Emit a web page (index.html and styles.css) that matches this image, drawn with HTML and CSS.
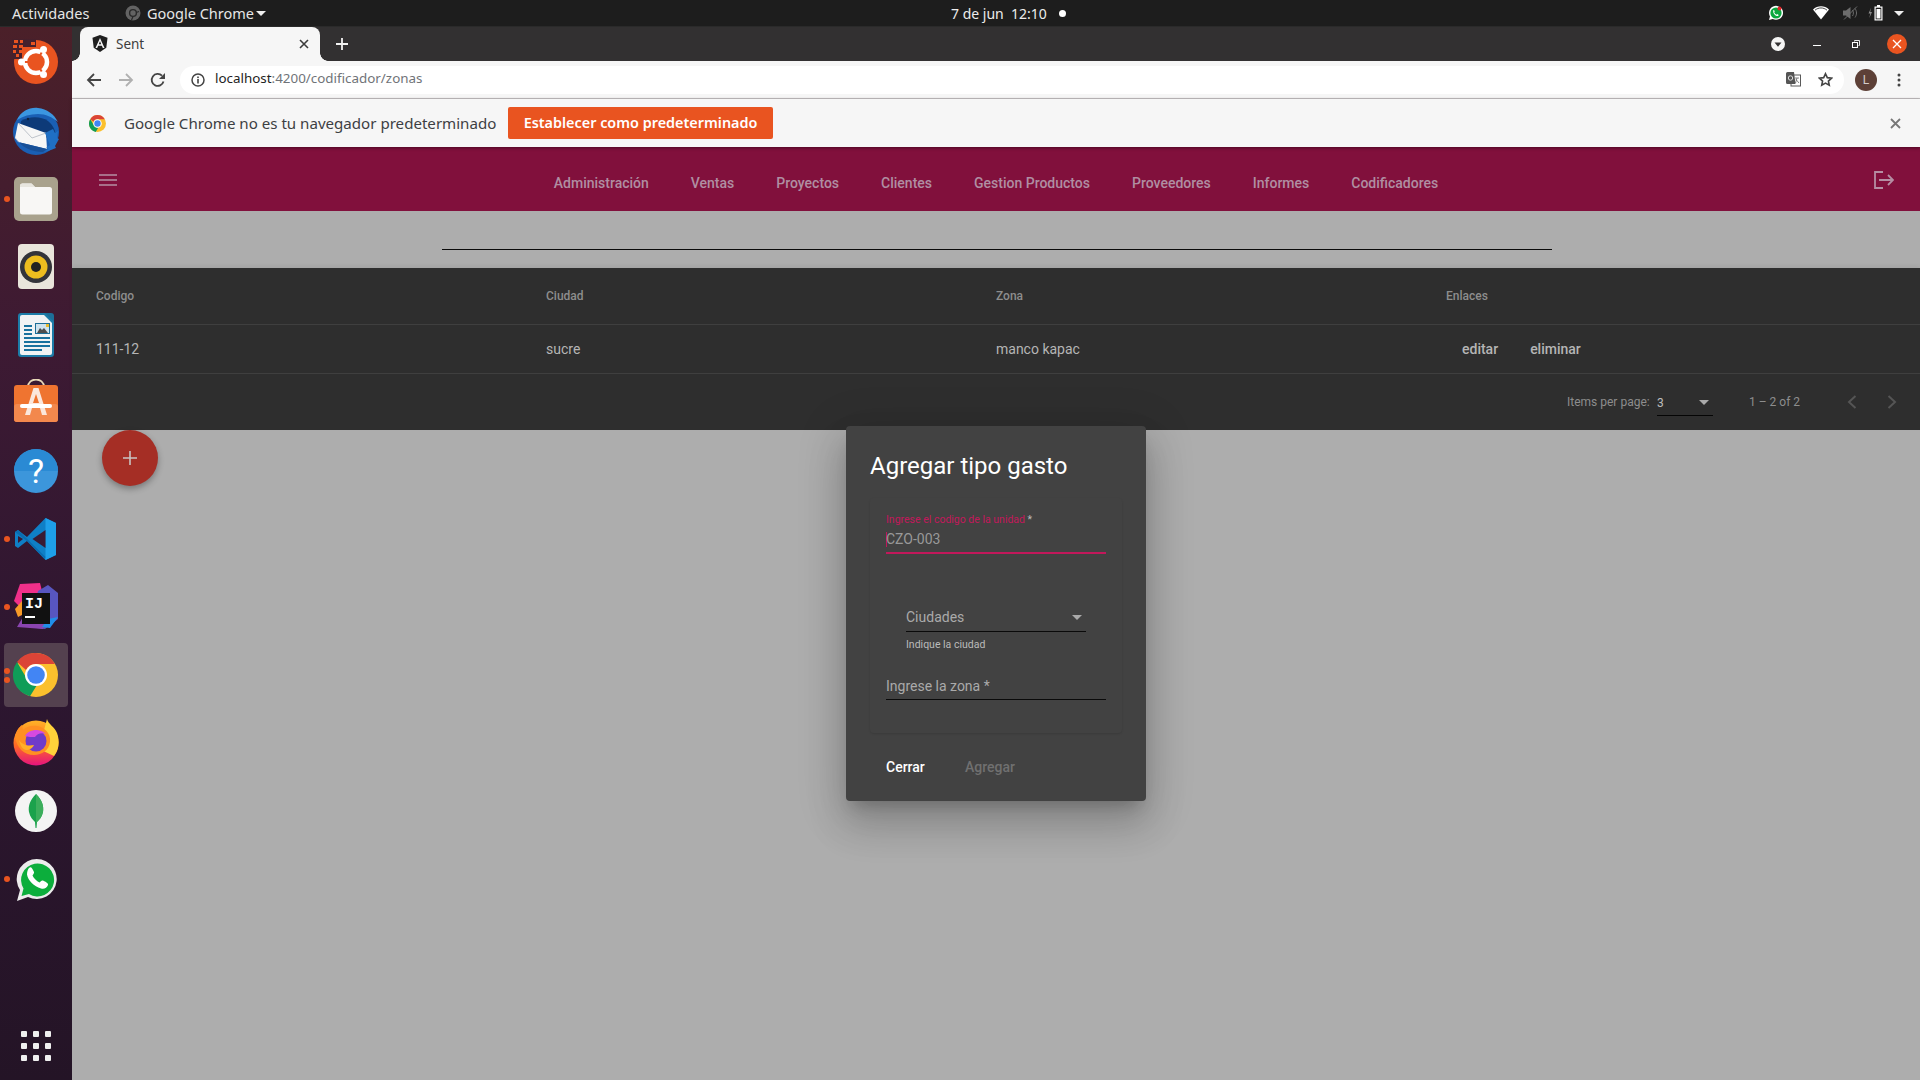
FILE: index.html
```html
<!DOCTYPE html>
<html lang="es">
<head>
<meta charset="utf-8">
<title>Sent</title>
<link rel="stylesheet" href="styles.css">
</head>
<body>
<header class="topbar">
  <span class="tb-act">Actividades</span>
  <svg class="tb-appicon" width="16" height="16" viewBox="0 0 16 16"><circle cx="8" cy="8" r="7.5" fill="#6b6b6b"/><circle cx="8" cy="8" r="3.4" fill="none" stroke="#2b2b2b" stroke-width="1.4"/><path d="M8 11.4L6.5 15M11.2 7.5l2.8-1" stroke="#2b2b2b" stroke-width="1.2"/></svg>
  <span class="tb-app">Google Chrome</span>
  <span class="caret"></span>
  <span class="tb-clock">7 de jun&nbsp; 12:10</span>
  <span class="tb-dot"></span>
  <svg class="tb-wa" width="16" height="16" viewBox="0 0 16 16"><path d="M1 15l1-3.6A7 7 0 1 1 4.700 14z" fill="#fff"/><circle cx="8" cy="8" r="5.600" fill="#0aa83f"/><path d="M5.500 5c.8-.6 1.100 1.500 1.200 1.700l-.5.800c.5 1 1.200 1.700 2.200 2.200l.8-.6 1.500 1c-.3 1.400-2 1-3 .4C6.300 9.800 4.500 7 5.500 5z" fill="#fff"/><circle cx="11.500" cy="3.500" r="2" fill="#e0262a"/></svg>
  <svg class="tb-wifi" width="16" height="14" viewBox="0 0 16 14"><path d="M0 3.500C4.500-.8 11.500-.8 16 3.500L8 13.500z" fill="#fff"/><path d="M2 4.200C5.500 1.200 10.500 1.200 14 4.200" stroke="#1d1d1d" stroke-width=".8" fill="none"/></svg>
  <svg class="tb-vol" width="16" height="14" viewBox="0 0 16 14"><path d="M0 4.500h3L7.500 1v12L3 9.500H0z" fill="#6d6d6d"/><path d="M9.500 4c1.200 1.800 1.200 4.200 0 6M12 2.500c2 2.800 2 6.200 0 9" stroke="#6d6d6d" fill="none"/><path d="M1 13.500L14 .5" stroke="#6d6d6d"/></svg>
  <svg class="tb-bat" width="16" height="16" viewBox="0 0 16 16"><path d="M3 3L.5 8.500h1.800L1.300 13 4 7H2.200z" fill="#8d8d8d"/><path d="M9 0h3v1.500h2.500V15.500h-8V1.500H9z" fill="#fff"/><rect x="7.700" y="2.700" width="5.600" height="11.600" fill="#1d1d1d"/><rect x="8.500" y="4" width="4" height="9.500" fill="#fff"/></svg>
  <span class="caret caret-end"></span>
</header>

<div class="desktop">
  <nav class="dock">
    <div class="dock-item">
      <svg width="48" height="48" viewBox="0 0 48 48"><circle cx="24" cy="23" r="22" fill="#e95420"/><path d="M0 0h24v8H10v12H0z" fill="#45202c"/><g fill="#e95420"><rect x="2" y="1" width="4" height="3"/><rect x="8" y="1" width="3" height="3"/><rect x="19" y="3" width="4" height="3"/><rect x="1" y="6" width="4" height="3"/><rect x="7" y="6" width="4" height="3"/><rect x="1" y="11" width="3" height="3"/><rect x="7" y="11" width="5" height="3"/><rect x="4" y="15" width="3" height="3"/></g><circle cx="24" cy="23" r="11" fill="none" stroke="#fff" stroke-width="4.500"/><g stroke="#e95420" stroke-width="2"><path d="M11 23h7M30 13l-3 5M30 33l-3-5"/></g><circle cx="9.500" cy="23" r="3.500" fill="#fff"/><circle cx="31.500" cy="10.500" r="3.500" fill="#fff"/><circle cx="31.500" cy="35.500" r="3.500" fill="#fff"/></svg>
    </div>
    <div class="dock-item">
      <svg width="48" height="48" viewBox="0 0 48 48"><circle cx="24" cy="25" r="23" fill="#1a5fb4"/><path d="M5 13C9 4 18 0 26 1c9 1 16 6 20 14-6-5-12-8-20-8-8 0-15 2-21 6z" fill="#3b96e0"/><path d="M9 14c8-5 20-5 27 0 6 5 9 12 7 20L33 30 8 20z" fill="#0d3a78"/><circle cx="16" cy="12" r="1.200" fill="#10233f"/><path d="M6 16l28 10 1 16L6 35l-3-4z" fill="#f6f6f6"/><path d="M6 16l14 15 14-5" fill="none" stroke="#bfc4cb" stroke-width="1"/><path d="M33 26l8-4 2 4 3-2-1 7 2 1-4 7 1 2-5 2-3 1-5 1 6-3-3-1 4-3z" fill="#1f6fc4"/><path d="M3 30l3 5 29 7-4 3c-12 0-22-5-28-15z" fill="#174f97"/></svg>
    </div>
    <div class="dock-item">
      <span class="run-dot"></span>
      <svg width="48" height="48" viewBox="0 0 48 48"><rect x="2" y="2" width="44" height="44" rx="5" fill="#a9a28d"/><path d="M8 11a2.500 2.500 0 0 1 2.500-2.500h9L23 12h14.500A2.500 2.500 0 0 1 40 14.500V37a2.500 2.500 0 0 1-2.500 2.500h-27A2.500 2.500 0 0 1 8 37z" fill="#f8f7f5"/><path d="M8 11a2.500 2.500 0 0 1 2.500-2.500h9L23 12H8z" fill="#e8e6df"/></svg>
    </div>
    <div class="dock-item">
      <svg width="48" height="48" viewBox="0 0 48 48"><rect x="6" y="1" width="36" height="45" rx="4" fill="#e9e5db"/><circle cx="24" cy="24" r="16" fill="#33343a"/><circle cx="24" cy="24" r="11.500" fill="#edbd1f"/><circle cx="24" cy="24" r="5" fill="#222"/></svg>
    </div>
    <div class="dock-item">
      <svg width="48" height="48" viewBox="0 0 48 48"><path d="M6 5a3 3 0 0 1 3-3h25l8 8v33a3 3 0 0 1-3 3H9a3 3 0 0 1-3-3z" fill="#1c7ca8"/><path d="M8 6a2 2 0 0 1 2-2h22l8 8v30a2 2 0 0 1-2 2H10a2 2 0 0 1-2-2z" fill="#f1f3f4"/><path d="M33 2h6a3 3 0 0 1 3 3v6z" fill="#1d6e97"/><g fill="#18719e"><rect x="12" y="14" width="8" height="2"/><rect x="12" y="18" width="8" height="2"/><rect x="12" y="22" width="8" height="2"/><rect x="12" y="26" width="26" height="2"/><rect x="12" y="30" width="26" height="2"/><rect x="12" y="34" width="26" height="2"/><rect x="12" y="38" width="18" height="2"/></g><rect x="23" y="12" width="15" height="11" fill="#1d6e97"/><rect x="24" y="13" width="13" height="9" fill="#cfe3ee"/><path d="M25 22l3-5 2 2 2-2 4 5z" fill="#4c4c4c"/><rect x="34" y="13" width="3" height="3" fill="#edbe2e"/></svg>
    </div>
    <div class="dock-item">
      <svg width="48" height="48" viewBox="0 0 48 48"><path d="M16 8c0-10 16-10 16 0" fill="none" stroke="#e8d9b8" stroke-width="1.800"/><rect x="2" y="6" width="44" height="37" rx="3" fill="#ef7430"/><rect x="2" y="25" width="44" height="18" rx="3" fill="#f3884d"/><path d="M21.500 9h5L35 36h-5l-2-7h-8l-2 7h-5z" fill="#fbe7dc"/><path d="M21 24h6l-3-9z" fill="#ef7430"/><rect x="8" y="25" width="32" height="4" rx="2" fill="#fff"/></svg>
    </div>
    <div class="dock-item">
      <svg width="48" height="48" viewBox="0 0 48 48"><circle cx="24" cy="24" r="22" fill="#3c96db"/><path d="M2 24a22 22 0 0 1 44 0z" fill="#2a8ad4"/><text x="24" y="36" class="help-q">?</text></svg>
    </div>
    <div class="dock-item">
      <span class="run-dot"></span>
      <svg width="48" height="48" viewBox="0 0 48 48"><path d="M33.500 3L44 8v32l-10.500 5L15 26l-9 7-3-2v-14l3-2 9 7z" fill="#0f7fc6"/><path d="M33.500 3L44 8v32l-10.500 5z" fill="#1e9fe9"/><path d="M33.500 15L20.500 24l13 9z" fill="#3a1a33"/><path d="M3 17l3-2 27.500 27-1 2L15 26z" fill="#0a6cb0"/><path d="M6 21l5 3-5 4z" fill="#3a1a33"/></svg>
    </div>
    <div class="dock-item">
      <span class="run-dot"></span>
      <svg width="48" height="48" viewBox="0 0 48 48"><path d="M8 1l20-1 4 16-24 8-6-6z" fill="#f0308a"/><path d="M3 26l7-8 8 10-12 6z" fill="#f79a28"/><path d="M26 8l10-6 10 8v26l-13 10-17-2z" fill="#5856c0"/><path d="M5 44l6-10 26 4-6 8z" fill="#8a45b0"/><path d="M36 36l10-2-8 11-8-1z" fill="#1f8ee8"/><rect x="10" y="10" width="28" height="31" fill="#111"/><text x="13" y="25" class="ij-text">IJ</text><rect x="13" y="33" width="10" height="2" fill="#fff"/></svg>
    </div>
    <div class="dock-item is-active">
      <span class="run-dot run-dot-a"></span><span class="run-dot run-dot-b"></span>
      <svg width="48" height="48" viewBox="0 0 48 48"><circle cx="24" cy="24" r="22" fill="#fbc02d"/><path d="M24 2a22 22 0 0 1 19 11H24a11 11 0 0 0-10 6L5 11A22 22 0 0 1 24 2z" fill="#db4437"/><path d="M5 11l10 17a10 10 0 0 0 10 6l-7 11.200A22 22 0 0 1 5 11z" fill="#0f9d58"/><circle cx="24" cy="24" r="11" fill="#fff"/><circle cx="24" cy="24" r="8.800" fill="#4285f4"/></svg>
    </div>
    <div class="dock-item">
      <svg width="48" height="48" viewBox="0 0 48 48"><defs><linearGradient id="ffg" x1="0" y1="0" x2="0" y2="1"><stop offset="0" stop-color="#ffb327"/><stop offset=".55" stop-color="#ff6a24"/><stop offset="1" stop-color="#e5137e"/></linearGradient></defs><circle cx="24" cy="24" r="22.500" fill="url(#ffg)"/><path d="M35 0c1 5 8 8 10 14 3 8 2 17-3 23L27 30z" fill="#ffd23a"/><path d="M3 18C4 12 7 8 10 6l1 5c3-3 8-5 14-4 7 1 14 7 13 16-1 8-8 13-16 13C12 36 5 29 3 18z" fill="#ff9022"/><circle cx="24" cy="22" r="10.500" fill="#6f3bc9"/><path d="M13 17c4-7 15-8 21-2-5-2-9 0-11 3-3 0-7 0-10-1z" fill="#d64ae0"/><path d="M7 21c4 6 10 6 15 5-1 3-5 5-8 5-4-1-6-5-7-10z" fill="#ffb02a"/></svg>
    </div>
    <div class="dock-item">
      <svg width="48" height="48" viewBox="0 0 48 48"><circle cx="24" cy="24" r="21" fill="#f4f4f4"/><path d="M24 7c6 6 8 12 7 18-1 5-4 8-6 10l-.5 6h-1L23 35c-2-2-5-5-6-10-1-6 1-12 7-18z" fill="#1ba24c"/><path d="M24 7c6 6 8 12 7 18-1 5-4 8-6 10l-1 .5z" fill="#3cae5c"/></svg>
    </div>
    <div class="dock-item">
      <span class="run-dot"></span>
      <svg width="48" height="48" viewBox="0 0 48 48"><path d="M5 46l3-11A20 20 0 1 1 16 42z" fill="#ececec"/><path d="M9.500 41l2-7.500a16.500 16.500 0 1 1 5.500 5.500z" fill="#0cae3c"/><path d="M17 13c2-2 3 0 5 4 .5 1-1 2.500-1.500 3.500 1.500 3 4 5.500 7 7 1-1 2-2.500 3.500-2 4 2 5.500 3 5 4.500-1 3-4 4.500-7 3.500-7-2-13-8-14-14 0-3 1-5.500 2-6.500z" fill="#fff"/></svg>
    </div>
    <div class="dock-grid">
      <i></i><i></i><i></i><i></i><i></i><i></i><i></i><i></i><i></i>
    </div>
  </nav>

  <div class="window">
    <div class="tabstrip">
      <div class="tab">
        <svg width="16" height="17" viewBox="0 0 16 17"><path d="M8 0L.5 2.700l1.200 10L8 17l6.300-4.300 1.200-10z" fill="#1f1f1f"/><path d="M8 3L3.500 13h1.700l.9-2.300h3.800l.9 2.300h1.700zM6.800 9.200L8 6.300l1.200 2.900z" fill="#f6f6f6"/></svg>
        <span class="tab-title">Sent</span>
        <svg class="tab-close" width="10" height="10" viewBox="0 0 10 10"><path d="M1 1l8 8M9 1L1 9" stroke="#3c3c3c" stroke-width="1.600"/></svg>
      </div>
      <svg class="new-tab" width="12" height="12" viewBox="0 0 12 12"><path d="M6 0v12M0 6h12" stroke="#f2f2f2" stroke-width="1.800"/></svg>
      <svg class="win-drop" width="14" height="14" viewBox="0 0 14 14"><circle cx="7" cy="7" r="7" fill="#f5f5f5"/><path d="M3.500 5.500h7L7 9.800z" fill="#323031"/></svg>
      <span class="win-min"></span>
      <svg class="win-max" width="8" height="8" viewBox="0 0 8 8"><path d="M2.500 1.500V.5h5v5h-1" fill="none" stroke="#e8e8e8"/><rect x=".5" y="2.500" width="5" height="5" fill="none" stroke="#fff"/></svg>
      <svg class="win-close" width="20" height="20" viewBox="0 0 20 20"><circle cx="10" cy="10" r="10" fill="#e95420"/><path d="M6 6l8 8M14 6l-8 8" stroke="#fff" stroke-width="1.300"/></svg>
    </div>

    <div class="toolbar">
      <svg class="tl-back" width="16" height="16" viewBox="0 0 16 16"><path d="M15 8H2M8 2L2 8l6 6" fill="none" stroke="#444" stroke-width="1.800"/></svg>
      <svg class="tl-fwd" width="16" height="16" viewBox="0 0 16 16"><path d="M1 8h13M8 2l6 6-6 6" fill="none" stroke="#b0b0b0" stroke-width="1.800"/></svg>
      <svg class="tl-reload" width="16" height="16" viewBox="0 0 16 16"><path d="M13.500 9.500A6 6 0 1 1 12 3.700" fill="none" stroke="#444" stroke-width="1.800"/><path d="M15 1v6H9z" fill="#444"/></svg>
      <div class="omnibox">
        <svg class="ob-info" width="14" height="14" viewBox="0 0 14 14"><circle cx="7" cy="7" r="6" fill="none" stroke="#444" stroke-width="1.500"/><rect x="6.200" y="6" width="1.600" height="4.500" fill="#444"/><rect x="6.200" y="3.500" width="1.600" height="1.600" fill="#444"/></svg>
        <span class="url"><span class="url-host">localhost</span>:4200/codificador/zonas</span>
        <svg class="ob-trans" width="15" height="15" viewBox="0 0 15 15"><rect x="5" y="3" width="9.500" height="11" fill="#fff" stroke="#5a5a5a"/><path d="M0 1.500A1.500 1.500 0 0 1 1.500 0H8l1.500 12H1.500A1.500 1.500 0 0 1 0 10.500z" fill="#555"/><circle cx="4.500" cy="6" r="2.200" fill="none" stroke="#ddd"/><path d="M9 6h4M11 6l-1.500 5M10 7.500l3 3.500" stroke="#666" fill="none" stroke-width=".8"/></svg>
        <svg class="ob-star" width="15" height="15" viewBox="0 0 24 24"><path d="M12 2.800l2.900 6.200 6.800.8-5 4.700 1.300 6.700-6-3.400-6 3.400 1.300-6.700-5-4.700 6.800-.8z" fill="none" stroke="#444" stroke-width="2.600"/></svg>
      </div>
      <span class="avatar">L</span>
      <svg class="tl-menu" width="4" height="14" viewBox="0 0 4 14"><circle cx="2" cy="2" r="1.500" fill="#444"/><circle cx="2" cy="7" r="1.500" fill="#444"/><circle cx="2" cy="12" r="1.500" fill="#444"/></svg>
    </div>

    <div class="infobar">
      <svg class="ib-logo" width="17" height="17" viewBox="0 0 48 48"><circle cx="24" cy="24" r="24" fill="#fbc02d"/><path d="M24 0a24 24 0 0 1 20.800 12H24a12 12 0 0 0-11 7L3.500 12A24 24 0 0 1 24 0z" fill="#db4437"/><path d="M3.500 12L15 31a11 11 0 0 0 11 5l-7 12A24 24 0 0 1 3.500 12z" fill="#0f9d58"/><circle cx="24" cy="24" r="12" fill="#fff"/><circle cx="24" cy="24" r="9" fill="#4285f4"/></svg>
      <span class="ib-text">Google Chrome no es tu navegador predeterminado</span>
      <button class="ib-btn">Establecer como predeterminado</button>
      <svg class="ib-close" width="11" height="11" viewBox="0 0 11 11"><path d="M1 1l9 9M10 1l-9 9" stroke="#777" stroke-width="1.800"/></svg>
    </div>

    <div class="app">
      <header class="app-header">
        <svg class="menu-ic" width="18" height="12" viewBox="0 0 18 12"><path d="M0 1h18M0 6h18M0 11h18" stroke="#b58ea3" stroke-width="1.600"/></svg>
        <nav class="nav">
          <a>Administración</a><a>Ventas</a><a>Proyectos</a><a>Clientes</a><a>Gestion Productos</a><a>Proveedores</a><a>Informes</a><a>Codificadores</a>
        </nav>
        <svg class="logout-ic" width="20" height="18" viewBox="0 0 20 18"><path d="M9 1H1v16h8" fill="none" stroke="#b58ea3" stroke-width="1.800"/><path d="M5 9h14M14 4l5 5-5 5" fill="none" stroke="#b58ea3" stroke-width="1.800"/></svg>
      </header>

      <div class="search-row"><div class="search-line"></div></div>

      <section class="table">
        <div class="row row-head"><span>Codigo</span><span>Ciudad</span><span>Zona</span><span>Enlaces</span></div>
        <div class="row row-body">
          <span>111-12</span><span>sucre</span><span>manco kapac</span>
          <span class="actions"><a>editar</a><a>eliminar</a></span>
        </div>
        <div class="paginator">
          <span class="pg-label">Items per page:</span>
          <span class="pg-select"><span>3</span><i class="pg-arrow"></i></span>
          <span class="pg-range">1 – 2 of 2</span>
          <svg class="pg-prev" width="10" height="14" viewBox="0 0 10 14"><path d="M8.500 1L2 7l6.500 6" fill="none" stroke="#555" stroke-width="2"/></svg>
          <svg class="pg-next" width="10" height="14" viewBox="0 0 10 14"><path d="M1.500 1L8 7l-6.500 6" fill="none" stroke="#555" stroke-width="2"/></svg>
        </div>
      </section>

      <button class="fab"><svg width="14" height="14" viewBox="0 0 14 14"><path d="M7 0v14M0 7h14" stroke="#c9c4c2" stroke-width="1.600"/></svg></button>

      <div class="dialog">
        <h2 class="dlg-title">Agregar tipo gasto</h2>
        <div class="dlg-card">
          <div class="field field-active">
            <label><span class="lbl-pink">Ingrese el codigo de la unidad</span> *</label>
            <div class="fld-val"><i class="cursor"></i>CZO-003</div>
          </div>
          <div class="select-field">
            <div class="sel-box"><span>Ciudades</span><i class="sel-arrow"></i></div>
            <div class="sel-hint">Indique la ciudad</div>
          </div>
          <div class="field-plain">Ingrese la zona *</div>
        </div>
        <div class="dlg-actions">
          <span class="dlg-close">Cerrar</span>
          <span class="dlg-add">Agregar</span>
        </div>
      </div>
    </div>
  </div>
</div>
</body>
</html>
```
FILE: styles.css
```css
* { box-sizing: border-box; }
html, body { margin: 0; height: 100%; }
body { width: 1920px; height: 1080px; overflow: hidden; display: flex; flex-direction: column; font-family: "Roboto", "Liberation Sans", sans-serif; background: #adadad; }
svg { display: block; flex: none; }

.topbar { height: 27px; flex: none; background: #1d1d1d; color: #e6e6e6; display: flex; align-items: center; font-family: "Noto Sans", "Open Sans", sans-serif; font-size: 14.5px; padding-left: 12px; border-bottom: 1px solid #2a2a2a; }
.tb-act { width: 113px; }
.tb-appicon { margin-right: 6px; opacity: .9; }
.tb-app { width: 109px; white-space: nowrap; }
.caret { width: 0; height: 0; flex: none; border-left: 5px solid transparent; border-right: 5px solid transparent; border-top: 5px solid #eee; }
.tb-clock { margin-left: 685px; width: 108px; color: #ececec; font-size: 14px; white-space: nowrap; }
.tb-dot { width: 7px; height: 7px; border-radius: 50%; background: #fff; }
.tb-wa { margin-left: 702px; }
.tb-wifi { margin-left: 29px; }
.tb-vol { margin-left: 14px; }
.tb-bat { margin-left: 9px; }
.caret-end { margin-left: 10px; }

.desktop { flex: 1; display: flex; min-height: 0; }
.dock { width: 72px; flex: none; padding-top: 2px; display: flex; flex-direction: column; background: linear-gradient(180deg, #4b2029 0%, #3d1a33 30%, #2d1630 62%, #241426 100%); }
.dock-item { height: 68px; position: relative; display: flex; align-items: center; justify-content: center; flex: none; }
.dock-item.is-active::before { content: ""; position: absolute; left: 4px; right: 4px; top: 2px; bottom: 2px; background: #54414f; border-radius: 4px; }
.dock-item svg { position: relative; }
.run-dot { position: absolute; left: 4px; top: 31px; width: 6px; height: 6px; border-radius: 50%; background: #e95420; z-index: 1; }
.run-dot-a { top: 27px; }
.run-dot-b { top: 36px; }
.help-q { font: 400 34px "Roboto", sans-serif; fill: #fff; text-anchor: middle; }
.ij-text { font: 700 15px "Liberation Mono", monospace; fill: #fff; }
.dock-grid { margin: auto 0 19px 21px; width: 30px; display: grid; grid-template-columns: repeat(3, 6px); grid-auto-rows: 6px; gap: 6px; }
.dock-grid i { background: #efefef; border-radius: 1px; }

.window { flex: 1; min-width: 0; display: flex; flex-direction: column; position: relative; }
.tabstrip { height: 34px; flex: none; background: #323031; display: flex; align-items: center; padding-left: 8px; }
.tab { width: 240px; height: 34px; position: relative; background: #f6f6f6; border-radius: 8px 8px 0 0; display: flex; align-items: center; padding: 0 0 1px 12px; color: #3c3c3c; font-family: "Noto Sans", "Open Sans", sans-serif; font-size: 13.5px; }
.tab::before, .tab::after { content: ""; position: absolute; bottom: 0; width: 8px; height: 8px; }
.tab::before { left: -8px; background: radial-gradient(circle at 0 0, transparent 7.5px, #f6f6f6 8px); }
.tab::after { right: -8px; background: radial-gradient(circle at 100% 0, transparent 7.5px, #f6f6f6 8px); }
.tab-title { margin-left: 8px; width: 183px; }
.new-tab { margin-left: 16px; }
.win-drop { margin-left: 1423px; }
.win-min { width: 8px; height: 1px; flex: none; background: #fff; margin: 3px 0 0 28px; }
.win-max { margin-left: 31px; }
.win-close { margin-left: 27px; }

.toolbar { height: 38px; flex: none; background: #f6f6f6; border-bottom: 1px solid #c4c4c4; display: flex; align-items: center; padding-left: 14px; }
.tl-fwd { margin-left: 16px; }
.tl-reload { margin-left: 16px; }
.omnibox { width: 1664px; height: 28px; margin-left: 14px; border-radius: 14px; background: #fff; display: flex; align-items: center; padding-left: 11px; font-family: "Noto Sans", "Open Sans", sans-serif; font-size: 13.4px; }
.url { margin-left: 10px; padding-bottom: 3px; color: #6f7378; width: 1571px; flex: none; }
.url-host { color: #222; }
.ob-star { margin-left: 17px; }
.avatar { width: 22px; height: 22px; margin-left: 11px; border-radius: 50%; background: #5d4037; color: #d5cdca; font-size: 12px; display: flex; align-items: center; justify-content: center; flex: none; }
.tl-menu { margin-left: 20px; }

.infobar { height: 48px; flex: none; background: #f6f6f6; display: flex; align-items: center; padding-left: 17px; position: relative; z-index: 1; box-shadow: 0 1px 3px rgba(40,0,20,.6); }
.ib-text { margin-left: 18px; width: 384px; font-family: "Noto Sans", "Open Sans", sans-serif; font-size: 15.1px; color: #3d4043; white-space: nowrap; }
.ib-btn { width: 265px; height: 32px; border: 0; border-radius: 2px; background: #e95420; color: #fff; font-family: "Noto Sans", "Open Sans", sans-serif; font-size: 14.4px; font-weight: 600; padding: 0 0 2px; }
.ib-close { margin-left: 1117px; }

.app { flex: 1; min-height: 0; background: #adadad; position: relative; display: flex; flex-direction: column; align-items: flex-start; }
.app-header { width: 100%; height: 64px; flex: none; background: #81103c; display: flex; align-items: center; position: relative; }
.menu-ic { margin-left: 27px; margin-top: 2px; }
.nav { position: absolute; left: 0; right: 0; top: 26px; display: flex; justify-content: center; gap: 42px; font-size: 14px; font-weight: 500; color: #b08ea2; line-height: 20px; }
.logout-ic { margin-left: auto; margin-right: 26px; margin-top: 2px; }

.search-row { width: 100%; height: 57px; flex: none; padding: 38px 0 0 370px; }
.search-line { width: 1110px; height: 1px; background: #0a0a0a; }

.table { width: 100%; height: 162px; flex: none; background: #2e2e2e; color: #b5b5b5; box-shadow: 0 -2px 4px rgba(0,0,0,.06); }
.row { display: grid; grid-template-columns: repeat(4, 450px); padding-left: 24px; border-bottom: 1px solid #3f3f3f; align-items: center; }
.row-head { height: 57px; font-size: 12px; font-weight: 500; color: #8d8d8d; }
.row-body { height: 49px; font-size: 14px; }
.actions { display: flex; gap: 32px; padding-left: 16px; font-weight: 500; }
.paginator { height: 56px; display: flex; align-items: center; padding-left: 1495px; font-size: 12px; color: #8d8d8d; }
.pg-label { width: 90px; }
.pg-select { width: 56px; height: 26px; border-bottom: 1px solid #050505; display: flex; align-items: center; justify-content: space-between; color: #bdbdbd; padding-right: 4px; position: relative; top: 1px; }
.pg-arrow, .sel-arrow { width: 0; height: 0; border-left: 5px solid transparent; border-right: 5px solid transparent; border-top: 5px solid #aaa; }
.pg-range { margin-left: 36px; width: 98px; }
.pg-next { margin-left: 30px; }

.fab { width: 56px; height: 56px; margin-left: 30px; border: 0; border-radius: 50%; background: #a52e25; display: flex; align-items: center; justify-content: center; box-shadow: 0 3px 6px rgba(0,0,0,.3); padding: 0; }

.dialog { position: absolute; left: 774px; top: 279px; width: 300px; height: 375px; background: #424242; border-radius: 4px; padding: 24px; color: #fff; box-shadow: 0 11px 15px -7px rgba(0,0,0,.2), 0 24px 38px 3px rgba(0,0,0,.14), 0 9px 46px 8px rgba(0,0,0,.12); }
.dlg-title { margin: 0; font-size: 24px; font-weight: 400; line-height: 32px; height: 48px; letter-spacing: 0; }
.dlg-card { height: 235px; border-radius: 4px; box-shadow: 0 1px 2px rgba(0,0,0,.12); padding: 16px 16px 0; }
.field { height: 40px; border-bottom: 2px solid #c2185b; }
.field label { display: block; font-size: 10.5px; line-height: 12px; color: #bbb; }
.lbl-pink { color: #c2185b; }
.fld-val { font-size: 14px; line-height: 18px; color: #999; margin-top: 4px; display: flex; align-items: center; }
.cursor { width: 1px; height: 15px; background: #c2185b; margin-right: -1px; }
.select-field { margin: 0 20px; padding-top: 51px; }
.sel-box { height: 27px; border-bottom: 1px solid #0a0a0a; display: flex; align-items: center; justify-content: space-between; padding: 0 4px 2px 0; font-size: 14px; color: #aaa; }
.sel-hint { font-size: 10.5px; line-height: 12px; margin-top: 7px; color: #bbb; }
.field-plain { margin-top: 24px; height: 25px; border-bottom: 1px solid #0a0a0a; font-size: 14px; line-height: 22px; color: #aaa; }
.dlg-actions { display: flex; padding: 24px 0 0 16px; font-size: 14px; font-weight: 500; line-height: 20px; }
.dlg-close { width: 79px; color: #fff; }
.dlg-add { color: #707070; }
```
